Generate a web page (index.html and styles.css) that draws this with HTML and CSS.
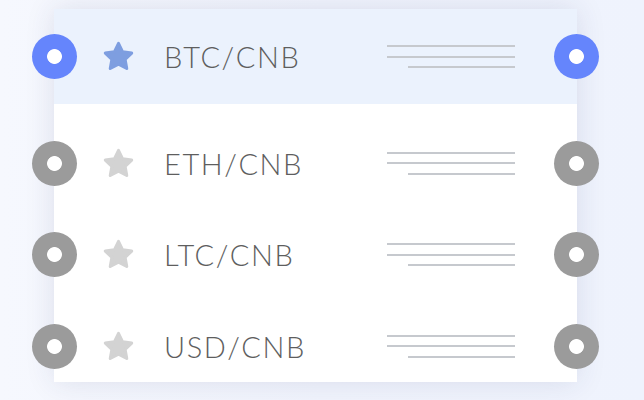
FILE: index.html
```html
<!DOCTYPE html>
<html lang="en">
<head>
  <meta charset="UTF-8" />
  <meta name="viewport" content="width=device-width, initial-scale=1.0"/>
  <title>Pairs</title>
  <link rel="stylesheet" href="styles.css">
</head>
<body>

  <div class="card">
    <div class="row active">
      <span class="dot"></span>
      <svg class="star" viewBox="0 0 24 24"><polygon points="12,2.5 15,8.6 21.6,9.5 16.8,14.1 18,20.7 12,17.5 6,20.7 7.2,14.1 2.4,9.5 9,8.6"/></svg>
      <span class="pair">BTC/CNB</span>
      <div class="lines"><i></i><i></i><i class="short"></i></div>
      <span class="dot"></span>
    </div>

    <div class="row">
      <span class="dot"></span>
      <svg class="star" viewBox="0 0 24 24"><polygon points="12,2.5 15,8.6 21.6,9.5 16.8,14.1 18,20.7 12,17.5 6,20.7 7.2,14.1 2.4,9.5 9,8.6"/></svg>
      <span class="pair">ETH/CNB</span>
      <div class="lines"><i></i><i></i><i class="short"></i></div>
      <span class="dot"></span>
    </div>

    <div class="row">
      <span class="dot"></span>
      <svg class="star" viewBox="0 0 24 24"><polygon points="12,2.5 15,8.6 21.6,9.5 16.8,14.1 18,20.7 12,17.5 6,20.7 7.2,14.1 2.4,9.5 9,8.6"/></svg>
      <span class="pair">LTC/CNB</span>
      <div class="lines"><i></i><i></i><i class="short"></i></div>
      <span class="dot"></span>
    </div>

    <div class="row">
      <span class="dot"></span>
      <svg class="star" viewBox="0 0 24 24"><polygon points="12,2.5 15,8.6 21.6,9.5 16.8,14.1 18,20.7 12,17.5 6,20.7 7.2,14.1 2.4,9.5 9,8.6"/></svg>
      <span class="pair">USD/CNB</span>
      <div class="lines"><i></i><i></i><i class="short"></i></div>
      <span class="dot"></span>
    </div>
  </div>

</body>
</html>
```

FILE: styles.css
```css
body {
  margin: 0;
  padding: 0;
  font-family: 'Lato', 'Open Sans', sans-serif;
  background: linear-gradient(90deg, #f6f8fe, #f1f4fd 50%, #eff3fd);
  height: 400px;
  overflow: hidden;
}

.card {
  margin: 9px 0 0 54px;
  width: 523px;
  height: 373px;
  background-color: #ffffff;
  box-shadow: 0 0 28px rgba(40, 50, 100, 0.12);
  display: flex;
  flex-direction: column;
  gap: 19.5px;
}

.row {
  height: 72px;
  display: flex;
  align-items: center;
}

.row.active {
  height: 95px;
  margin-bottom: 3.5px;
  background-color: #ebf2fd;
}

.dot {
  width: 45px;
  height: 45px;
  border-radius: 50%;
  background: radial-gradient(circle, #ffffff 7px, #9b9b9b 7.8px);
  flex-shrink: 0;
}

.row .dot:first-child {
  margin-left: -22px;
}

.row .dot:last-child {
  margin-right: -21.5px;
}

.active .dot {
  background: radial-gradient(circle, #ffffff 7px, #6585fc 7.8px);
}

.star {
  width: 33px;
  height: 33px;
  margin-left: 25px;
  fill: #d3d3d3;
  stroke: #d3d3d3;
  stroke-width: 2.2;
  stroke-linejoin: round;
}

.active .star {
  fill: #7e9ee0;
  stroke: #7e9ee0;
}

.pair {
  margin-left: 29px;
  font-size: 29px;
  font-weight: 300;
  letter-spacing: 1.6px;
  color: #5e5e5e;
}

.lines {
  margin-left: auto;
  width: 128px;
  display: flex;
  flex-direction: column;
  align-items: flex-end;
  gap: 8.5px;
  margin-right: 39px;
}

.lines i {
  display: block;
  width: 128px;
  height: 2px;
  background-color: #c6c9ce;
}

.lines i.short {
  width: 107px;
}
```
